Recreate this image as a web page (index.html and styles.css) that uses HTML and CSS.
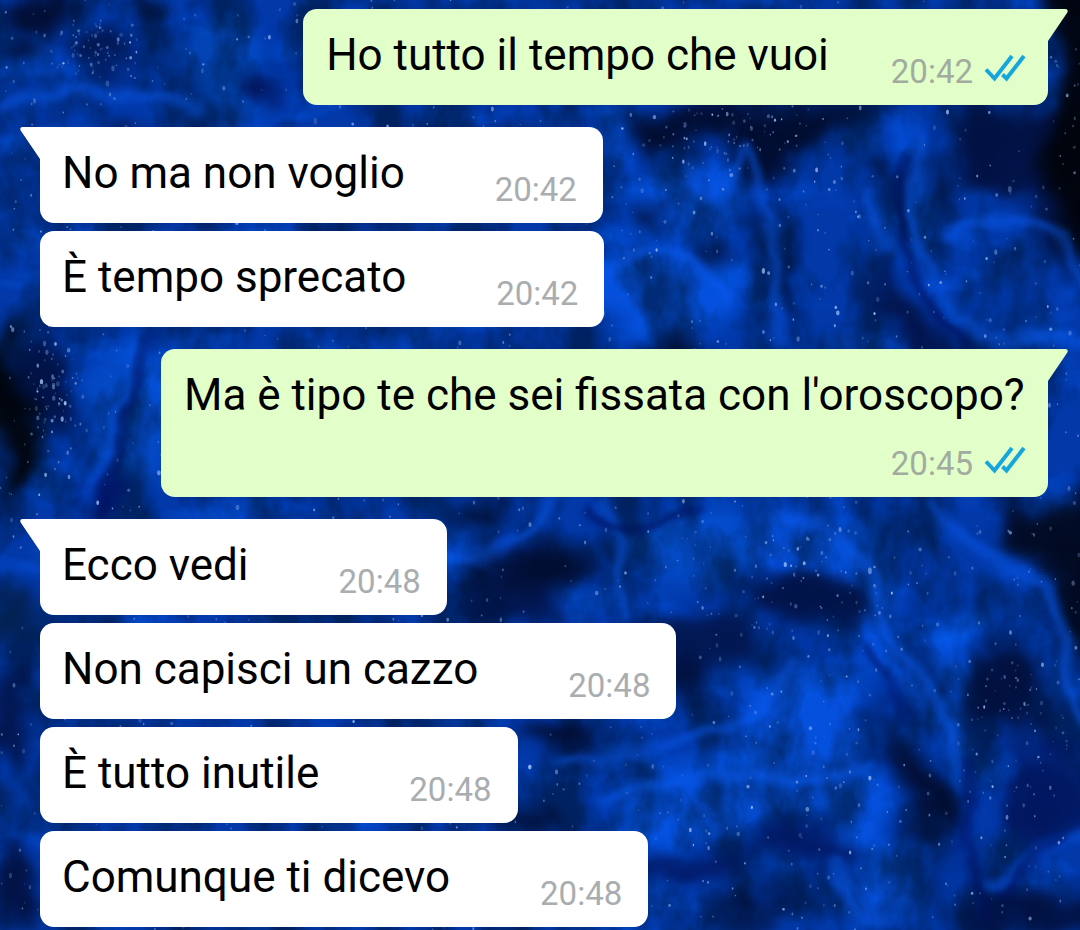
FILE: index.html
```html
<!DOCTYPE html>
<html lang="it">
<head>
  <meta charset="UTF-8">
  <meta name="viewport" content="width=device-width, initial-scale=1">
  <title>Chat</title>
  <link rel="stylesheet" href="styles.css">
</head>
<body>

  <svg class="wallpaper" viewBox="0 0 1080 930" preserveAspectRatio="xMidYMid slice" aria-hidden="true">
    <defs>
      <filter id="paint" x="-10%" y="-10%" width="120%" height="120%" color-interpolation-filters="sRGB">
        <feGaussianBlur stdDeviation="9" result="soft"/>
        <feTurbulence type="fractalNoise" baseFrequency="0.012" numOctaves="3" seed="8" result="noise"/>
        <feDisplacementMap in="soft" in2="noise" scale="60" xChannelSelector="R" yChannelSelector="G" result="moved"/>
        <feGaussianBlur in="moved" stdDeviation="2"/>
      </filter>
      <filter id="swirl" x="-10%" y="-10%" width="120%" height="120%" color-interpolation-filters="sRGB">
        <feGaussianBlur stdDeviation="4" result="soft"/>
        <feTurbulence type="fractalNoise" baseFrequency="0.016" numOctaves="3" seed="3" result="noise"/>
        <feDisplacementMap in="soft" in2="noise" scale="26" xChannelSelector="R" yChannelSelector="G"/>
      </filter>
      <filter id="shade" x="0" y="0" width="100%" height="100%" color-interpolation-filters="sRGB">
        <feTurbulence type="fractalNoise" baseFrequency="0.02 0.012" numOctaves="5" seed="21"/>
        <feColorMatrix values="0 0 0 0 0  0 0 0 0 0.08  0 0 0 0 0.2  3 0 0 0 -1.100"/>
      </filter>
      <filter id="glow" x="0" y="0" width="100%" height="100%" color-interpolation-filters="sRGB">
        <feTurbulence type="fractalNoise" baseFrequency="0.01 0.024" numOctaves="4" seed="5"/>
        <feColorMatrix values="0 0 0 0 0.02  0 0 0 0 0.34  0 0 0 0 0.9  0 3 0 0 -1.500"/>
      </filter>
    </defs>

    <rect width="1080" height="930" fill="#0238a8"/>

    <!-- bright pools -->
    <g fill="#0550dc" filter="url(#paint)">
      <ellipse cx="225" cy="70" rx="40" ry="60" fill="#0344b4"/>
      <ellipse cx="620" cy="135" rx="18" ry="34"/>
      <ellipse cx="705" cy="200" rx="60" ry="38"/>
      <ellipse cx="660" cy="290" rx="85" ry="48"/>
      <ellipse cx="912" cy="190" rx="12" ry="80"/>
      <ellipse cx="130" cy="420" rx="45" ry="80" fill="#0448c4"/>
      <ellipse cx="690" cy="545" rx="80" ry="38" fill="#044ac4"/>
      <path d="M740 500H830L890 560 890 640 940 720 900 720 850 620 780 560Z"/>
      <path d="M600 800 740 740 790 660 860 690 890 860 860 900 820 810 640 850Z"/>
      <ellipse cx="955" cy="625" rx="24" ry="9" fill="#0866ff"/>
      <path d="M940 630H970L965 790 940 800Z"/>
      <ellipse cx="640" cy="850" rx="50" ry="16"/>
      <ellipse cx="890" cy="885" rx="50" ry="30"/>
    </g>

    <rect width="1080" height="930" filter="url(#glow)" opacity=".6"/>
    <rect width="1080" height="930" filter="url(#shade)" opacity=".6"/>

    <!-- dark pools -->
    <g fill="#020b2c" opacity=".92" filter="url(#paint)">
      <ellipse cx="48" cy="16" rx="38" ry="24"/>
      <ellipse cx="26" cy="56" rx="20" ry="10"/>
      <ellipse cx="115" cy="55" rx="36" ry="14" fill="#021143"/>
      <ellipse cx="148" cy="10" rx="18" ry="12"/>
      <ellipse cx="122" cy="120" rx="14" ry="8"/>
      <ellipse cx="262" cy="88" rx="24" ry="18" fill="#02145a"/>
      <path d="M640 105H880L800 150 765 190 800 330 776 310 764 200 710 135 650 150Z"/>
      <ellipse cx="716" cy="255" rx="12" ry="14"/>
      <ellipse cx="648" cy="225" rx="18" ry="10"/>
      <ellipse cx="872" cy="165" rx="10" ry="14"/>
      <ellipse cx="936" cy="195" rx="10" ry="36" fill="#02143e"/>
      <path d="M960 110H1100V290L1040 220 960 200Z" fill="#021040"/>
      <path d="M1044 -20H1110V270L1080 250 1030 180 1050 110Z" fill="#010206"/>
      <path d="M882 240C890 290 930 320 980 360H920C884 320 872 290 882 240Z" fill="#021143"/>
      <ellipse cx="680" cy="350" rx="36" ry="14"/>
      <ellipse cx="8" cy="420" rx="24" ry="84" fill="#010307"/>
      <ellipse cx="52" cy="390" rx="24" ry="50" fill="#021143"/>
      <ellipse cx="106" cy="495" rx="20" ry="18" fill="#021669"/>
      <ellipse cx="530" cy="572" rx="56" ry="20"/>
      <ellipse cx="480" cy="508" rx="36" ry="9"/>
      <ellipse cx="520" cy="606" rx="50" ry="12" fill="#021143"/>
      <ellipse cx="800" cy="600" rx="60" ry="30" fill="#021143"/>
      <ellipse cx="690" cy="650" rx="60" ry="34" fill="#02164e"/>
      <ellipse cx="686" cy="690" rx="36" ry="9"/>
      <ellipse cx="560" cy="742" rx="50" ry="14"/>
      <ellipse cx="536" cy="826" rx="34" ry="10"/>
      <path d="M1000 495H1110V700L1070 640 1050 565 1010 550Z" fill="#02081b"/>
      <path d="M880 700 905 740 940 800 960 930 945 860 900 810Z"/>
      <ellipse cx="1010" cy="690" rx="44" ry="50" fill="#020f3c"/>
      <ellipse cx="1050" cy="790" rx="50" ry="50" fill="#02165e"/>
      <ellipse cx="690" cy="870" rx="70" ry="12" fill="#02165e"/>
      <ellipse cx="810" cy="850" rx="60" ry="16" fill="#02165e"/>
      <ellipse cx="1040" cy="915" rx="80" ry="18" fill="#020f3c"/>
      <ellipse cx="750" cy="912" rx="60" ry="9"/>
      <ellipse cx="16" cy="610" rx="20" ry="34" fill="#03204e"/>
      <ellipse cx="16" cy="720" rx="20" ry="50" fill="#02144a"/>
      <ellipse cx="12" cy="890" rx="20" ry="40" fill="#020f3c"/>
    </g>

    <!-- paint streaks -->
    <g class="streaks" filter="url(#swirl)">
      <path d="M950 240C1000 205 1060 215 1090 280"/>
      <path d="M918 130C905 200 910 290 970 325S1050 330 1090 350"/>
      <path d="M680 160C690 200 725 195 738 155S775 240 780 350"/>
      <path d="M600 275C640 245 690 240 730 300"/>
      <path d="M868 190C870 240 880 260 890 240"/>
      <path d="M440 562C520 552 560 540 550 495"/>
      <path d="M605 500C620 540 620 590 625 620"/>
      <path d="M780 515C860 530 880 580 885 620S960 690 960 790"/>
      <path d="M930 500C960 580 1030 550 1050 590S1060 690 1085 720"/>
      <path d="M600 800C680 770 780 780 870 770"/>
      <path d="M560 765C660 750 760 720 795 670"/>
      <path d="M840 860C830 900 850 920 890 925"/>
      <path d="M980 890C1020 890 1030 850 1085 830"/>
      <path d="M88 500C110 450 134 380 142 344"/>
      <path d="M0 110C60 80 130 95 210 115"/>
    </g>
    <g class="streaks dark" filter="url(#swirl)">
      <path d="M96 510C116 450 138 390 148 335"/>
      <path d="M905 150C890 230 905 300 970 345"/>
      <path d="M594 505C604 560 640 520 700 508"/>
      <path d="M995 900C1030 880 1036 850 1065 835"/>
      <path d="M966 760C960 820 970 870 980 930"/>
      <path d="M860 640C880 680 900 690 905 720"/>
    </g>

    <g id="stars" fill="#9fc0f5"></g>
  </svg>

  <svg class="defs" aria-hidden="true">
    <symbol id="ticks" viewBox="0 0 42 28">
      <path d="M2 15.500 10.500 24.500 28 2M18.500 20.500 22.500 24.500 40 2" fill="none" stroke="#17a5dd" stroke-width="4"/>
    </symbol>
    <symbol id="tail" viewBox="0 0 20 32">
      <path d="M0 0H17.500C19.500 0 20.500 2 19 4L0 32Z" fill="currentColor"/>
    </symbol>
  </svg>

  <main class="chat">
    <div class="group sent">
      <div class="bubble">
        <svg class="tail"><use href="#tail"/></svg>
        <p>Ho tutto il tempo che vuoi</p>
        <span class="meta"><time>20:42</time><svg class="ticks" role="img" aria-label="Letto"><use href="#ticks"/></svg></span>
      </div>
    </div>

    <div class="group received">
      <div class="bubble">
        <svg class="tail"><use href="#tail"/></svg>
        <p>No ma non voglio</p>
        <span class="meta"><time>20:42</time></span>
      </div>
      <div class="bubble">
        <p>È tempo sprecato</p>
        <span class="meta"><time>20:42</time></span>
      </div>
    </div>

    <div class="group sent">
      <div class="bubble">
        <svg class="tail"><use href="#tail"/></svg>
        <p>Ma è tipo te che sei fissata con l'oroscopo?</p>
        <span class="meta"><time>20:45</time><svg class="ticks" role="img" aria-label="Letto"><use href="#ticks"/></svg></span>
      </div>
    </div>

    <div class="group received">
      <div class="bubble">
        <svg class="tail"><use href="#tail"/></svg>
        <p>Ecco vedi</p>
        <span class="meta"><time>20:48</time></span>
      </div>
      <div class="bubble">
        <p>Non capisci un cazzo</p>
        <span class="meta"><time>20:48</time></span>
      </div>
      <div class="bubble">
        <p>È tutto inutile</p>
        <span class="meta"><time>20:48</time></span>
      </div>
      <div class="bubble">
        <p>Comunque ti dicevo</p>
        <span class="meta"><time>20:48</time></span>
      </div>
    </div>
  </main>

  <script src="stars.js"></script>
</body>
</html>
```
FILE: styles.css
```css
* {
  box-sizing: border-box;
}

body {
  margin: 0;
  background: #0238a8;
  font-family: Roboto, "Liberation Sans", sans-serif;
  color: #000;
}

.wallpaper {
  position: fixed;
  inset: 0;
  z-index: -1;
  width: 100%;
  height: 100%;
}

.streaks {
  fill: none;
  stroke: #0a5af0;
  stroke-width: 11;
  opacity: 0.55;
}

.streaks.dark {
  stroke: #010d58;
  stroke-width: 7;
  opacity: 0.8;
}

.defs {
  display: none;
}

.chat {
  display: flex;
  flex-direction: column;
  gap: 22px;
  padding: 9px 32px 3px 40px;
}

.group {
  display: flex;
  flex-direction: column;
  align-items: flex-start;
  gap: 8px;
}

.sent {
  align-items: flex-end;
}

.bubble {
  position: relative;
  display: flex;
  flex-wrap: wrap;
  align-items: flex-end;
  gap: 12px 90px;
  max-width: 88%;
  padding: 20px 26px 13px 22px;
  border-radius: 14px;
  background: #fff;
}

.sent .bubble {
  column-gap: 62px;
  padding-left: 23px;
  padding-right: 22px;
  background: #e2ffc9;
}

.received .bubble:first-child {
  border-top-left-radius: 0;
}

.sent .bubble:first-child {
  border-top-right-radius: 0;
}

.bubble p {
  margin: 0 0 11px;
  font-size: 44px;
  line-height: 52px;
}

.meta {
  display: flex;
  align-items: center;
  gap: 11px;
  margin-left: auto;
  font-size: 33px;
  line-height: 40px;
  color: #a9adaf;
}

.sent .meta {
  color: #a2aba0;
}

.ticks {
  width: 42px;
  height: 28px;
  margin-bottom: 8px;
}

.tail {
  position: absolute;
  top: 0;
  width: 20px;
  height: 32px;
}

.sent .tail {
  left: 100%;
  color: #e2ffc9;
}

.received .tail {
  right: 100%;
  color: #fff;
  transform: scaleX(-1);
}
```
FILE: stars.js
```js
// scatter the stars, always in the same places
let seed = 42;

function random() {
  seed = (seed * 16807) % 2147483647;
  return seed / 2147483647;
}

const stars = document.getElementById('stars');

function addStar(x, y) {
  const star = document.createElementNS('http://www.w3.org/2000/svg', 'ellipse');
  const size = 0.7 + random() * random() * 1.3;
  star.setAttribute('cx', x.toFixed(1));
  star.setAttribute('cy', y.toFixed(1));
  star.setAttribute('rx', size.toFixed(1));
  star.setAttribute('ry', (size * (1 + random() * 0.8)).toFixed(1));
  star.setAttribute('opacity', (0.2 + random() * random() * 0.8).toFixed(2));
  stars.appendChild(star);
}

for (let i = 0; i < 1600; i++) {
  addStar(random() * 1080, random() * 930);
}

// denser clusters
[[50, 390, 40, 80], [100, 50, 60, 35], [720, 130, 120, 60], [800, 600, 130, 80], [1020, 700, 70, 150]].forEach(([x, y, w, h]) => {
  for (let i = 0; i < 70; i++) {
    addStar(x + (random() + random() - 1) * w, y + (random() + random() - 1) * h);
  }
});
```
